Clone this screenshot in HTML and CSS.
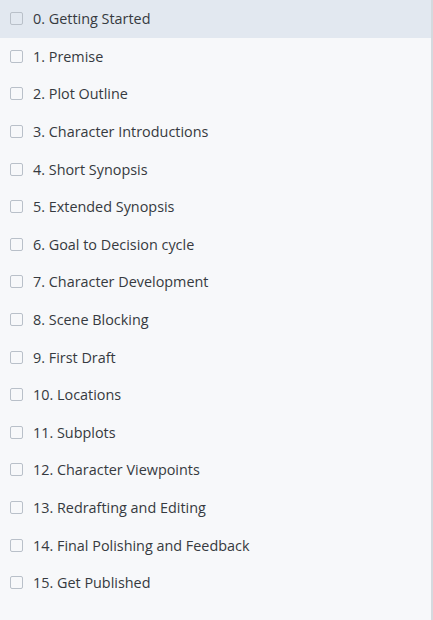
FILE: index.html
```html
<!DOCTYPE html>
<html lang="en">
<head>
  <meta charset="UTF-8">
  <meta name="viewport" content="width=device-width, initial-scale=1.0">
  <title>Steps</title>
  <link rel="stylesheet" href="styles.css">
</head>
<body>
  <ul class="steps">
    <li class="step active"><span class="box"></span>0. Getting Started</li>
    <li class="step"><span class="box"></span>1. Premise</li>
    <li class="step"><span class="box"></span>2. Plot Outline</li>
    <li class="step"><span class="box"></span>3. Character Introductions</li>
    <li class="step"><span class="box"></span>4. Short Synopsis</li>
    <li class="step"><span class="box"></span>5. Extended Synopsis</li>
    <li class="step"><span class="box"></span>6. Goal to Decision cycle</li>
    <li class="step"><span class="box"></span>7. Character Development</li>
    <li class="step"><span class="box"></span>8. Scene Blocking</li>
    <li class="step"><span class="box"></span>9. First Draft</li>
    <li class="step"><span class="box"></span>10. Locations</li>
    <li class="step"><span class="box"></span>11. Subplots</li>
    <li class="step"><span class="box"></span>12. Character Viewpoints</li>
    <li class="step"><span class="box"></span>13. Redrafting and Editing</li>
    <li class="step"><span class="box"></span>14. Final Polishing and Feedback</li>
    <li class="step"><span class="box"></span>15. Get Published</li>
  </ul>
</body>
</html>
```

FILE: styles.css
```css
html, body {
  height: 100%;
}

body {
  margin: 0;
  font-family: 'Open Sans', sans-serif;
  font-size: 14.4px;
  color: #363a40;
  background-color: #f7f8fa;
  border-right: 2px solid #d5d9de;
  box-sizing: border-box;
}

.steps {
  list-style: none;
  margin: 0;
  padding: 0;
}

.step {
  display: flex;
  align-items: center;
  height: 37.6px;
  padding-left: 10px;
  cursor: pointer;
}

.step:first-child {
  height: 37px;
  padding-bottom: 0.6px;
}

.step.active {
  background-color: #e2e8f0;
}

.box {
  width: 11px;
  height: 11px;
  border: 1px solid #b9c0c9;
  border-radius: 2px;
  margin-right: 10px;
  flex-shrink: 0;
}
```
